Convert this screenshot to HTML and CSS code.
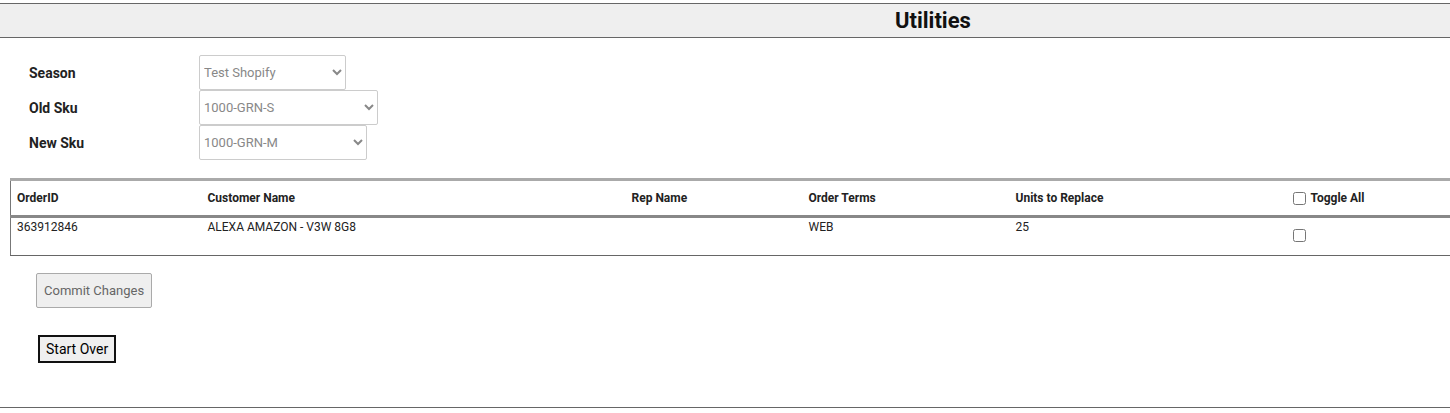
FILE: index.html
```html
<!DOCTYPE html>
<html lang="en">
<head>
  <meta charset="UTF-8">
  <title>Utilities</title>
  <link rel="stylesheet" href="styles.css">
</head>
<body>
  <header class="page-header">
    <h1>Utilities</h1>
  </header>

  <div class="filters">
    <div class="filter-row">
      <label for="seasonSelect">Season</label>
      <select id="seasonSelect" class="season">
        <option>Test Shopify</option>
      </select>
    </div>
    <div class="filter-row">
      <label for="oldSku">Old Sku</label>
      <select id="oldSku" class="old-sku">
        <option>1000-GRN-S</option>
      </select>
    </div>
    <div class="filter-row">
      <label for="newSku">New Sku</label>
      <select id="newSku" class="new-sku">
        <option>1000-GRN-M</option>
      </select>
    </div>
  </div>

  <div class="table-wrap">
    <table class="orders">
      <colgroup>
        <col style="width:191px">
        <col style="width:424px">
        <col style="width:177px">
        <col style="width:207px">
        <col style="width:277px">
        <col>
      </colgroup>
      <thead>
        <tr>
          <th>OrderID</th>
          <th>Customer Name</th>
          <th>Rep Name</th>
          <th>Order Terms</th>
          <th>Units to Replace</th>
          <th><label class="toggle"><input type="checkbox"> Toggle All</label></th>
        </tr>
      </thead>
      <tbody>
        <tr>
          <td>363912846</td>
          <td>ALEXA AMAZON - V3W 8G8</td>
          <td></td>
          <td>WEB</td>
          <td>25</td>
          <td><input type="checkbox" class="row-check"></td>
        </tr>
      </tbody>
    </table>
  </div>

  <div class="actions">
    <button class="commit" disabled>Commit Changes</button>
    <button class="start-over">Start Over</button>
  </div>

  <footer class="page-footer"></footer>
</body>
</html>
```

FILE: styles.css
```css
body {
  margin: 0;
  font-family: Roboto, 'Liberation Sans', sans-serif;
  color: #222;
  background: #fff;
}

.page-header {
  margin-top: 3px;
  background: #efefef;
  border-top: 1px solid #666;
  border-bottom: 1px solid #666;
  height: 33px;
}

.page-header h1 {
  margin: 0;
  padding-left: 895px;
  font-size: 22px;
  font-weight: 700;
  line-height: 33px;
  color: #111;
}

.filters {
  padding: 17px 0 0 29px;
}

.filter-row {
  display: flex;
  align-items: center;
  height: 35px;
}

.filter-row label {
  width: 170px;
  font-size: 14px;
  font-weight: 700;
}

.filter-row select {
  height: 35px;
  padding: 0;
  font-family: inherit;
  font-size: 13px;
  color: #888;
  background: #fff;
  border: 1px solid #ccc;
  border-radius: 2px;
}

.season { width: 147px; }
.old-sku { width: 179px; }
.new-sku { width: 168px; }

.table-wrap {
  margin: 18px 0 0 10px;
  overflow: hidden;
}

.orders {
  width: 1900px;
  border-collapse: collapse;
  table-layout: fixed;
  border-left: 1px solid #777;
  border-bottom: 1px solid #666;
  font-size: 12px;
}

.orders th {
  height: 34px;
  padding: 0 6px;
  text-align: left;
  font-weight: 700;
  border-top: 3px solid #aaa;
  border-bottom: 3px solid #888;
}

.orders td {
  height: 35px;
  padding: 2px 6px 0;
  vertical-align: top;
}

.toggle {
  display: flex;
  align-items: center;
  gap: 5px;
}

.toggle input {
  margin: 0;
}

.row-check {
  margin: 9px 0 0;
}

.actions {
  display: flex;
  flex-direction: column;
  align-items: flex-start;
  padding: 17px 0 0 36px;
}

.commit {
  height: 35px;
  padding: 0 7px;
  font-family: inherit;
  font-size: 13px;
  color: #666;
  background: #efefef;
  border: 1px solid #aaa;
  border-radius: 2px;
}

.start-over {
  margin: 27px 0 0 2px;
  height: 28px;
  padding: 0 6px;
  font-family: inherit;
  font-size: 14px;
  color: #000;
  background: #efefef;
  border: 2px solid #111;
  border-radius: 0;
}

.page-footer {
  margin-top: 44px;
  border-top: 1px solid #666;
}
```
